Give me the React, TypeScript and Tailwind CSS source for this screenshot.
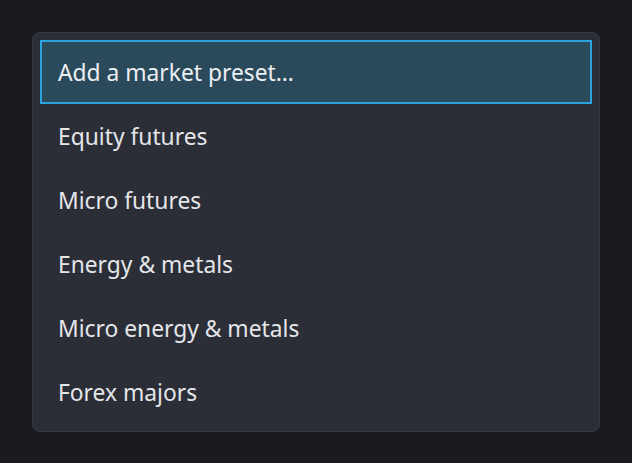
import React from "react";

const presets = [
  "Add a market preset…",
  "Equity futures",
  "Micro futures",
  "Energy & metals",
  "Micro energy & metals",
  "Forex majors",
];

export default function App() {
  const active = 0;
  return (
    <div
      className="h-[463px] bg-[#1a1b1f] p-8"
      style={{ fontFamily: '"Noto Sans", "Open Sans", sans-serif' }}
    >
      <ul className="rounded-lg border border-[#363942] bg-[#2b2e36] p-[7px]">
        {presets.map((label, i) => (
          <li
            key={label}
            className={
              i === active
                ? "flex h-16 items-center border-2 border-[#2aa3dc] bg-[#2a4a5b] pl-4 pt-[3px] text-[22.8px] text-[#eceff2]"
                : "flex h-16 items-center border-2 border-transparent pl-4 pt-[3px] text-[22.8px] text-[#e4e6ea]"
            }
          >
            {label}
          </li>
        ))}
      </ul>
    </div>
  );
}
